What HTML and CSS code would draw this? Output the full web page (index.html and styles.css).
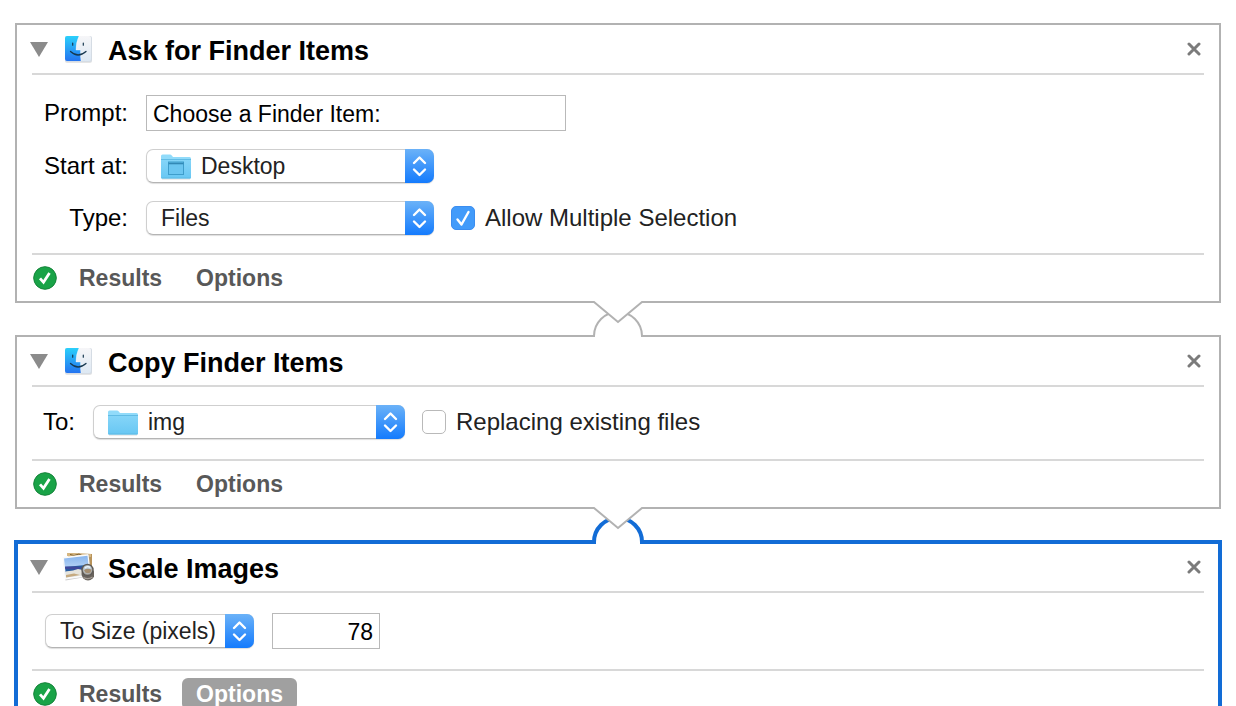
FILE: index.html
```html
<!DOCTYPE html>
<html lang="en">
<head>
<meta charset="utf-8">
<title>Workflow</title>
<link rel="stylesheet" href="styles.css">
</head>
<body>
<svg class="defs" aria-hidden="true">
  <defs>
    <linearGradient id="face" x1="0" y1="0" x2="0" y2="1"><stop offset="0" stop-color="#2bd0fb"/><stop offset="1" stop-color="#2474f0"/></linearGradient>
    <linearGradient id="pale" x1="0" y1="0" x2="0" y2="1"><stop offset="0" stop-color="#f6f6f8"/><stop offset="1" stop-color="#dde8f3"/></linearGradient>
    <linearGradient id="fold" x1="0" y1="0" x2="0" y2="1"><stop offset="0" stop-color="#85d5f8"/><stop offset="1" stop-color="#68c7f3"/></linearGradient>
    <linearGradient id="sky" x1="0" y1="0" x2="0" y2="1"><stop offset="0" stop-color="#86b4ee"/><stop offset="1" stop-color="#dcecfb"/></linearGradient>
    <symbol id="finder" viewBox="0 0 32 32">
      <rect x="3" y="4" width="27" height="26" rx="2" fill="#000" opacity=".1"/>
      <rect x="3" y="3" width="27" height="26" rx="2" fill="#d5dce4"/>
      <rect x="3" y="3" width="26" height="25" rx="2" fill="url(#pale)"/>
      <path d="M5 3H17Q14 9 14 17H18.500Q18 22 19 28H5Q3 28 3 26V5Q3 3 5 3Z" fill="url(#face)"/>
      <path d="M17 3Q14 9 14 17H18.500Q18 22 19 28" fill="none" stroke="#fff" stroke-width=".6" opacity=".6"/>
      <path d="M10.700 10V12.200M21.300 10V12.200" stroke="#17384f" stroke-width="1.200" stroke-linecap="round"/>
      <path d="M8.500 18.500Q16 25.500 24 18.500" fill="none" stroke="#17384f" stroke-width="1.300" stroke-linecap="round"/>
    </symbol>
    <symbol id="preview" viewBox="0 0 32 32" overflow="visible">
      <path d="M6 2L30 3V26L8 25Z" fill="#b8935a"/>
      <path d="M5 2L29 3V6L5 5Z" fill="#d6b782"/>
      <path d="M8 3.500L12 4.500L17 3L21 5L27 3.500" stroke="#80602d" stroke-width="1" fill="none"/>
      <path d="M1 6.500L27 3.500L29.500 25L3.500 29.500Z" fill="#999" opacity=".5"/>
      <path d="M.5 6L26.500 3L29 25L3 28.500Z" fill="#fafafa"/>
      <path d="M2 7.500L25.500 4.800L27.500 23.500L4 26.500Z" fill="url(#sky)"/>
      <path d="M3 16L26.400 13.800L27 18L3.600 21Z" fill="#285c9f"/>
      <path d="M3 15.500L14 15.500L20 16.500L26.500 15V16.500L13 18.500L3.400 18Z" fill="#3f489b"/>
      <path d="M3.500 20.500L11 19.500L16 18L21 19L27 18L27.600 23.500L4 26.500Z" fill="#e6e4dc"/>
      <path d="M4 24L12 22.500L18 24L4 26.500Z" fill="#c5aa80"/>
      <circle cx="26" cy="23" r="6.500" fill="#69635d"/>
      <circle cx="25.500" cy="19" r="5.500" fill="#aaa59e" stroke="#5e5b57" stroke-width="1.400"/>
      <circle cx="25.500" cy="18.500" r="4" fill="#bed0df"/>
      <path d="M22 19Q25 17 29.500 18.500L28.500 21.500Q26 23 23 21.500Z" fill="#a58e70"/>
      <path d="M23 17Q25.500 14.500 28 16.500" stroke="#eef4f9" stroke-width="1.300" fill="none"/>
      <path d="M21.500 26.500Q26 29 30.500 26" stroke="#a7a098" stroke-width="1.200" fill="none"/>
    </symbol>
    <symbol id="folder" viewBox="0 0 30 26">
      <path d="M1 24.500H29V25.500H1Z" fill="#000" opacity=".14"/>
      <path d="M0 2Q0 .5 1.500 .5H9Q10 .5 11 1.700L12 3H28.500Q30 3 30 4.500V24H0Z" fill="#91dbfa"/>
      <path d="M0 5.500H30V23.500Q30 24.500 29 24.500H1Q0 24.500 0 23.500Z" fill="url(#fold)"/>
      <path d="M0 5.500H30M.5 24H29.500" stroke="#58b5df" stroke-width=".8"/>
    </symbol>
    <symbol id="steps" viewBox="0 0 29 34">
      <path d="M9 14L14.500 8.500L20 14M9 20.500L14.500 26L20 20.500" fill="none" stroke="#fff" stroke-width="2.400" stroke-linecap="round" stroke-linejoin="round"/>
    </symbol>
    <symbol id="done" viewBox="0 0 24 24">
      <circle cx="12" cy="12" r="11.300" fill="#19a347" stroke="#148339" stroke-width="1"/>
      <path d="M7 12.300L10.500 16.300L16.500 7" fill="none" stroke="#fff" stroke-width="2.800"/>
    </symbol>
    <symbol id="cross" viewBox="0 0 14 14">
      <path d="M2 2L12 12M12 2L2 12" stroke="#7b7b7b" stroke-width="3" stroke-linecap="round"/>
    </symbol>
  </defs>
</svg>

<main class="workflow">
  <section class="action">
    <header class="head">
      <button class="toggle" aria-label="Collapse"><svg viewBox="0 0 18 16"><path d="M0 1H18L9 16Z" fill="#8b8b8b"/></svg></button>
      <svg class="app"><use href="#finder"/></svg>
      <h2 class="title">Ask for Finder Items</h2>
      <button class="close" aria-label="Remove"><svg><use href="#cross"/></svg></button>
    </header>
    <div class="fields">
      <div class="row">
        <label class="label" for="prompt">Prompt:</label>
        <input class="text prompt" id="prompt" type="text" value="Choose a Finder Item:">
      </div>
      <div class="row">
        <label class="label" for="start">Start at:</label>
        <div class="popup start">
          <select class="with-icon" id="start"><option>Desktop</option></select>
          <svg class="folder" viewBox="0 0 30 26"><use href="#folder"/><rect x="7.500" y="8" width="15" height="12.500" fill="#6bc6f1" stroke="#3e9dcb"/><path d="M7.500 9.500H22.500" stroke="#3289b6" stroke-width="1.600"/></svg>
          <svg class="steps"><use href="#steps"/></svg>
        </div>
      </div>
      <div class="row">
        <label class="label" for="type">Type:</label>
        <div class="popup start">
          <select id="type"><option>Files</option></select>
          <svg class="steps"><use href="#steps"/></svg>
        </div>
        <label class="check"><input type="checkbox" checked><svg class="tick" viewBox="0 0 24 24"><path d="M6.500 13.500L10.500 18.500L17.500 6" fill="none" stroke="#fff" stroke-width="2.400" stroke-linecap="round" stroke-linejoin="round"/></svg>Allow Multiple Selection</label>
      </div>
    </div>
    <footer class="foot">
      <svg class="done"><use href="#done"/></svg>
      <button class="tab">Results</button>
      <button class="tab">Options</button>
    </footer>
  </section>

  <div class="link">
    <svg viewBox="0 0 64 38">
      <path d="M9 35H55V38H9Z" fill="#fff"/>
      <path d="M0 36H8A24 24 0 0 1 56 36H64" fill="#fff" stroke="#b2b2b2" stroke-width="2"/>
      <path d="M8 0H56V2L32 22L8 2Z" fill="#fff"/>
      <path d="M0 2H8L32 22L56 2H64" fill="none" stroke="#b2b2b2" stroke-width="2"/>
    </svg>
  </div>

  <section class="action">
    <header class="head">
      <button class="toggle" aria-label="Collapse"><svg viewBox="0 0 18 16"><path d="M0 1H18L9 16Z" fill="#8b8b8b"/></svg></button>
      <svg class="app"><use href="#finder"/></svg>
      <h2 class="title">Copy Finder Items</h2>
      <button class="close" aria-label="Remove"><svg><use href="#cross"/></svg></button>
    </header>
    <div class="fields copy">
      <div class="row">
        <label class="label" for="dest">To:</label>
        <div class="popup dest">
          <select class="with-icon" id="dest"><option>img</option></select>
          <svg class="folder"><use href="#folder"/></svg>
          <svg class="steps"><use href="#steps"/></svg>
        </div>
        <label class="check"><input type="checkbox">Replacing existing files</label>
      </div>
    </div>
    <footer class="foot">
      <svg class="done"><use href="#done"/></svg>
      <button class="tab">Results</button>
      <button class="tab">Options</button>
    </footer>
  </section>

  <div class="link">
    <svg viewBox="0 0 64 38">
      <path d="M10 35H54V38H10Z" fill="#fff"/>
      <path d="M0 36H8A24 24 0 0 1 56 36H64" fill="#fff" stroke="#126cd6" stroke-width="4"/>
      <path d="M8 0H56V2L32 22L8 2Z" fill="#fff"/>
      <path d="M0 2H8L32 22L56 2H64" fill="none" stroke="#b2b2b2" stroke-width="2"/>
    </svg>
  </div>

  <section class="action selected">
    <header class="head">
      <button class="toggle" aria-label="Collapse"><svg viewBox="0 0 18 16"><path d="M0 1H18L9 16Z" fill="#8b8b8b"/></svg></button>
      <svg class="app"><use href="#preview"/></svg>
      <h2 class="title">Scale Images</h2>
      <button class="close" aria-label="Remove"><svg><use href="#cross"/></svg></button>
    </header>
    <div class="fields scale">
      <div class="row">
        <div class="popup mode">
          <select aria-label="Scale mode"><option>To Size (pixels)</option></select>
          <svg class="steps"><use href="#steps"/></svg>
        </div>
        <input class="text size" type="text" aria-label="Size" value="78">
      </div>
    </div>
    <footer class="foot">
      <svg class="done"><use href="#done"/></svg>
      <button class="tab">Results</button>
      <button class="tab on">Options</button>
    </footer>
  </section>
</main>
</body>
</html>
```

FILE: styles.css
```css
* { box-sizing: border-box; }
html { scrollbar-width: none; }
body {
  margin: 0;
  background: #fff;
  color: #000;
  font: 23px/28px "Liberation Sans", Arial, sans-serif;
}
button, input, select { font: inherit; color: inherit; margin: 0; }
button { border: 0; padding: 0; background: none; }
svg { display: block; flex: none; }
.defs { position: absolute; width: 0; height: 0; }

.workflow { padding: 23px 15px 15px; }
.action { border: 2px solid #b2b2b2; padding: 0 15px; background: #fff; }
.selected {
  border-color: #126cd6;
  box-shadow: 0 0 0 1px #126cd6, inset 0 0 0 1px #126cd6;
}

.head {
  display: flex;
  align-items: center;
  height: 50px;
  border-bottom: 2px solid #d8d8d8;
}
.toggle { margin-left: -2px; }
.toggle svg { width: 18px; height: 16px; }
.app { width: 32px; height: 32px; margin: 0 14px; }
.title { flex: 1; margin: 0; font-size: 27px; line-height: 32px; padding-top: 4px; }
.close { margin-right: 3px; }
.close svg { width: 14px; height: 14px; }

.fields {
  display: flex;
  flex-direction: column;
  gap: 18px;
  padding: 20px 0 18px;
  border-bottom: 2px solid #d8d8d8;
}
.row { display: flex; align-items: center; gap: 18px; }
.label { width: 96px; text-align: right; font-size: 24px; }
.copy { padding: 18px 0 20px; }
.copy .label { width: 43px; }
.scale { padding: 20px 0 20px 13px; }

.text {
  height: 36px;
  padding: 2px 6px 0;
  border: 1px solid #b9b9b9;
  border-radius: 0;
  background: #fff;
  outline: 0;
}
.prompt { width: 420px; }
.size { width: 108px; text-align: right; }

.popup { position: relative; height: 34px; }
.popup select {
  display: block;
  appearance: none;
  width: 100%;
  height: 34px;
  padding: 0 32px 0 14px;
  border: 1px solid #cfcfcf;
  border-bottom-color: #b4b4b4;
  border-radius: 7px;
  background: #fff;
  box-shadow: 0 1px 1px #0002;
  color: #222;
}
.popup .with-icon { padding-left: 54px; }
.start { width: 288px; }
.dest { width: 312px; }
.mode { width: 209px; }
.folder {
  position: absolute;
  left: 15px;
  top: 5px;
  width: 30px;
  height: 26px;
  pointer-events: none;
}
.steps {
  position: absolute;
  right: 0;
  top: 0;
  width: 29px;
  height: 34px;
  border-radius: 0 7px 7px 0;
  background: linear-gradient(#6bb2f8, #147bfd);
  pointer-events: none;
}

.check {
  position: relative;
  display: flex;
  align-items: center;
  gap: 10px;
  margin-left: -1px;
  color: #222;
  font-size: 24px;
}
.check input {
  appearance: none;
  width: 24px;
  height: 24px;
  border: 1px solid #b9b9b9;
  border-radius: 5px;
  background: #fff;
}
.check input:checked { border-color: #3b8df0; background: #429bfa; }
.tick { position: absolute; left: 0; top: 2px; width: 24px; height: 24px; pointer-events: none; }

.foot { display: flex; align-items: center; height: 46px; padding-left: 1px; }
.done { width: 24px; height: 24px; margin-right: 8px; }
.tab {
  height: 32px;
  margin-right: 6px;
  padding: 0 14px;
  border-radius: 6px;
  color: #585858;
  font-weight: bold;
}
.on { background: #a0a0a0; color: #fff; }

.link { position: relative; display: flex; justify-content: center; height: 32px; }
.link svg { width: 64px; height: 38px; margin: -3px 0; }
```
